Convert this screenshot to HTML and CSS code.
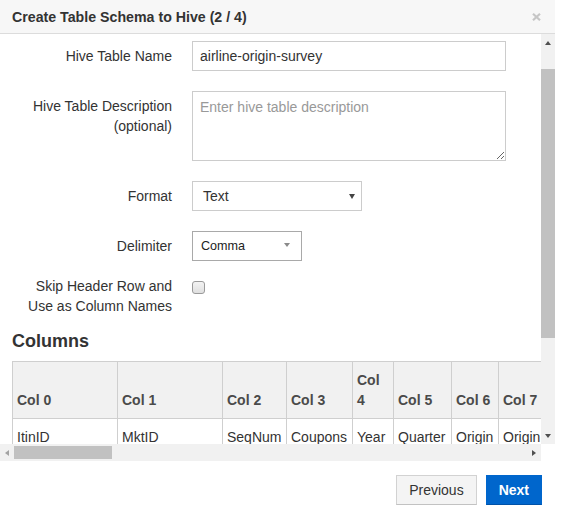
FILE: index.html
```html
<!DOCTYPE html>
<html lang="en">
<head>
<meta charset="utf-8">
<title>Create Table Schema to Hive</title>
<link rel="stylesheet" href="styles.css">
</head>
<body>
<div class="modal">
  <div class="modal-header">
    <h4 class="modal-title">Create Table Schema to Hive (2 / 4)</h4>
    <svg class="close" width="9" height="8" viewBox="0 0 9 8" aria-label="close"><path d="M1 0.8 L8 7.2 M8 0.8 L1 7.2" stroke="#c6c6c6" stroke-width="2.2" fill="none"/></svg>
  </div>
  <div class="modal-body">
    <div class="viewport">
      <div class="form">
        <label class="lbl">Hive Table Name</label>
        <input class="ctrl ctrl-wide" type="text" value="airline-origin-survey">

        <label class="lbl">Hive Table Description<br>(optional)</label>
        <textarea class="ctrl ctrl-wide ctrl-area" placeholder="Enter hive table description"></textarea>

        <label class="lbl">Format</label>
        <div class="select select-format"><span>Text</span><span class="caret caret-dark"></span></div>

        <label class="lbl">Delimiter</label>
        <div class="select select-delim"><span>Comma</span><span class="caret caret-light"></span></div>

        <label class="lbl lbl-check">Skip Header Row and<br>Use as Column Names</label>
        <span class="checkbox"></span>
      </div>

      <h4 class="section-title">Columns</h4>

      <table class="cols">
        <colgroup>
          <col class="w105"><col class="w105"><col class="w64"><col class="w66"><col class="w41"><col class="w58"><col class="w47"><col class="w50">
        </colgroup>
        <thead>
          <tr><th>Col 0</th><th>Col 1</th><th>Col 2</th><th>Col 3</th><th>Col 4</th><th>Col 5</th><th>Col 6</th><th>Col 7</th></tr>
        </thead>
        <tbody>
          <tr><td>ItinID</td><td>MktID</td><td>SeqNum</td><td>Coupons</td><td>Year</td><td>Quarter</td><td>Origin</td><td>Origin</td></tr>
        </tbody>
      </table>
    </div>

    <div class="vbar">
      <div class="sb-btn"><span class="arr arr-up"></span></div>
      <div class="sb-track-v"><div class="thumb-v"></div></div>
      <div class="sb-btn"><span class="arr arr-down"></span></div>
    </div>

    <div class="hbar">
      <div class="sb-btn-h"><span class="arr arr-left"></span></div>
      <div class="sb-track-h"><div class="thumb-h"></div></div>
      <div class="sb-btn-h"><span class="arr arr-right"></span></div>
    </div>
    <div class="corner"></div>
  </div>
  <div class="modal-footer">
    <button class="btn btn-default" type="button">Previous</button>
    <button class="btn btn-primary" type="button">Next</button>
  </div>
</div>
</body>
</html>
```

FILE: styles.css
```css
* { box-sizing: border-box; }

body {
  margin: 0;
  background: #fff;
  font-family: "Liberation Sans", Arial, sans-serif;
  font-size: 14px;
  line-height: 20px;
  color: #333;
}

.modal {
  width: 555px;
  background: #fff;
}

.modal-header {
  height: 34px;
  display: flex;
  align-items: center;
  justify-content: space-between;
  padding: 0 14px 0 12px;
  background: #f7f7f7;
  border-bottom: 1px solid #dcdcdc;
}

.modal-title {
  margin: 0;
  font-size: 14.2px;
  font-weight: 700;
  line-height: 20px;
  color: #333;
}

.close { display: block; margin-top: 1px; }

.modal-body {
  display: grid;
  grid-template-columns: 541px 14px;
  grid-template-rows: 410px 17px;
}

.viewport {
  min-width: 0;
  overflow: hidden;
  padding-left: 12px;
}

.form {
  display: grid;
  grid-template-columns: 160px auto;
  column-gap: 20px;
  row-gap: 20px;
  align-items: start;
  padding-top: 7px;
}

.lbl {
  text-align: right;
  padding-top: 5px;
  line-height: 20px;
  color: #333;
}

.lbl-check {
  padding-top: 0;
  margin-top: -5px;
}

.ctrl {
  display: block;
  font-family: "Liberation Sans", Arial, sans-serif;
  font-size: 14px;
  line-height: 20px;
  color: #333;
  border: 1px solid #ccc;
  border-radius: 0;
  background: #fff;
  margin: 0;
  outline: none;
}

.ctrl-wide {
  width: 314px;
  height: 30px;
  padding: 4px 7px;
}

.ctrl-area {
  height: 70px;
  padding: 5px 7px;
  resize: vertical;
}

.ctrl-area::placeholder { color: #999; }

.select {
  display: flex;
  align-items: center;
  justify-content: space-between;
  height: 30px;
  background: #fff;
  justify-self: start;
}

.select-format {
  width: 170px;
  border: 1px solid #ccc;
  padding: 0 6px 0 10px;
  font-size: 14px;
}

.select-delim {
  width: 110px;
  border: 1px solid #a9a9a9;
  padding: 0 11px 0 8px;
  font-size: 12.6px;
  color: #222;
}

.caret {
  width: 0;
  height: 0;
  border-left: 3px solid transparent;
  border-right: 3px solid transparent;
}

.caret-dark {
  border-top: 5px solid #444;
  margin-top: 1px;
}

.caret-light {
  border-top: 4px solid #8a8a8a;
  margin-top: -2px;
}

.checkbox {
  display: block;
  width: 13px;
  height: 13px;
  border: 1px solid #9a9a9a;
  border-radius: 3px;
  background: linear-gradient(#f3f3f3, #dfdfdf);
}

.section-title {
  margin: 15px 0 10px;
  font-size: 18px;
  font-weight: 700;
  line-height: 20px;
  color: #333;
}

.cols {
  border-collapse: collapse;
  table-layout: fixed;
  width: 536px;
}

.w105 { width: 105px; }
.w64 { width: 64px; }
.w66 { width: 66px; }
.w41 { width: 41px; }
.w58 { width: 58px; }
.w47 { width: 47px; }
.w50 { width: 50px; }

.cols th,
.cols td {
  border: 1px solid #cfcfcf;
  padding: 8px 4px;
  text-align: left;
  line-height: 20px;
  overflow: hidden;
}

.cols th {
  background: #f1f1f1;
  font-weight: 700;
  color: #4a4a4a;
  vertical-align: bottom;
}

.cols td {
  white-space: nowrap;
  color: #333;
}

/* scrollbars */
.vbar {
  display: flex;
  flex-direction: column;
  background: #f1f1f1;
}

.sb-btn {
  height: 17px;
  display: flex;
  align-items: center;
  justify-content: center;
}

.sb-track-v { flex: 1; }

.thumb-v {
  margin-top: 18px;
  height: 269px;
  background: #c1c1c1;
}

.hbar {
  display: flex;
  background: #f1f1f1;
}

.sb-btn-h {
  width: 14px;
  display: flex;
  align-items: center;
  justify-content: center;
}

.sb-track-h {
  flex: 1;
  display: flex;
  align-items: center;
}

.thumb-h {
  width: 98px;
  height: 13px;
  background: #c1c1c1;
}

.corner { background: #fff; }

.arr { width: 0; height: 0; display: block; }

.arr-up {
  border-left: 3.5px solid transparent;
  border-right: 3.5px solid transparent;
  border-bottom: 4px solid #505050;
}

.arr-down {
  border-left: 3.5px solid transparent;
  border-right: 3.5px solid transparent;
  border-top: 4px solid #505050;
}

.arr-left {
  border-top: 3.5px solid transparent;
  border-bottom: 3.5px solid transparent;
  border-right: 4px solid #a3a3a3;
}

.arr-right {
  border-top: 3.5px solid transparent;
  border-bottom: 3.5px solid transparent;
  border-left: 4px solid #505050;
}

.modal-footer {
  display: flex;
  justify-content: flex-end;
  gap: 9px;
  padding: 14px 13px 0 0;
}

.btn {
  height: 30px;
  padding: 0 12px;
  font-family: "Liberation Sans", Arial, sans-serif;
  font-size: 14px;
  line-height: 20px;
  border-radius: 0;
  cursor: pointer;
}

.btn-default {
  background: #f4f4f4;
  color: #333;
  border: 1px solid #d2d2d2;
  border-bottom-color: #c2c2c2;
}

.btn-primary {
  background: #0066cc;
  color: #fff;
  font-weight: 700;
  border: 1px solid #0066cc;
  border-bottom-color: #0052a8;
}
```
